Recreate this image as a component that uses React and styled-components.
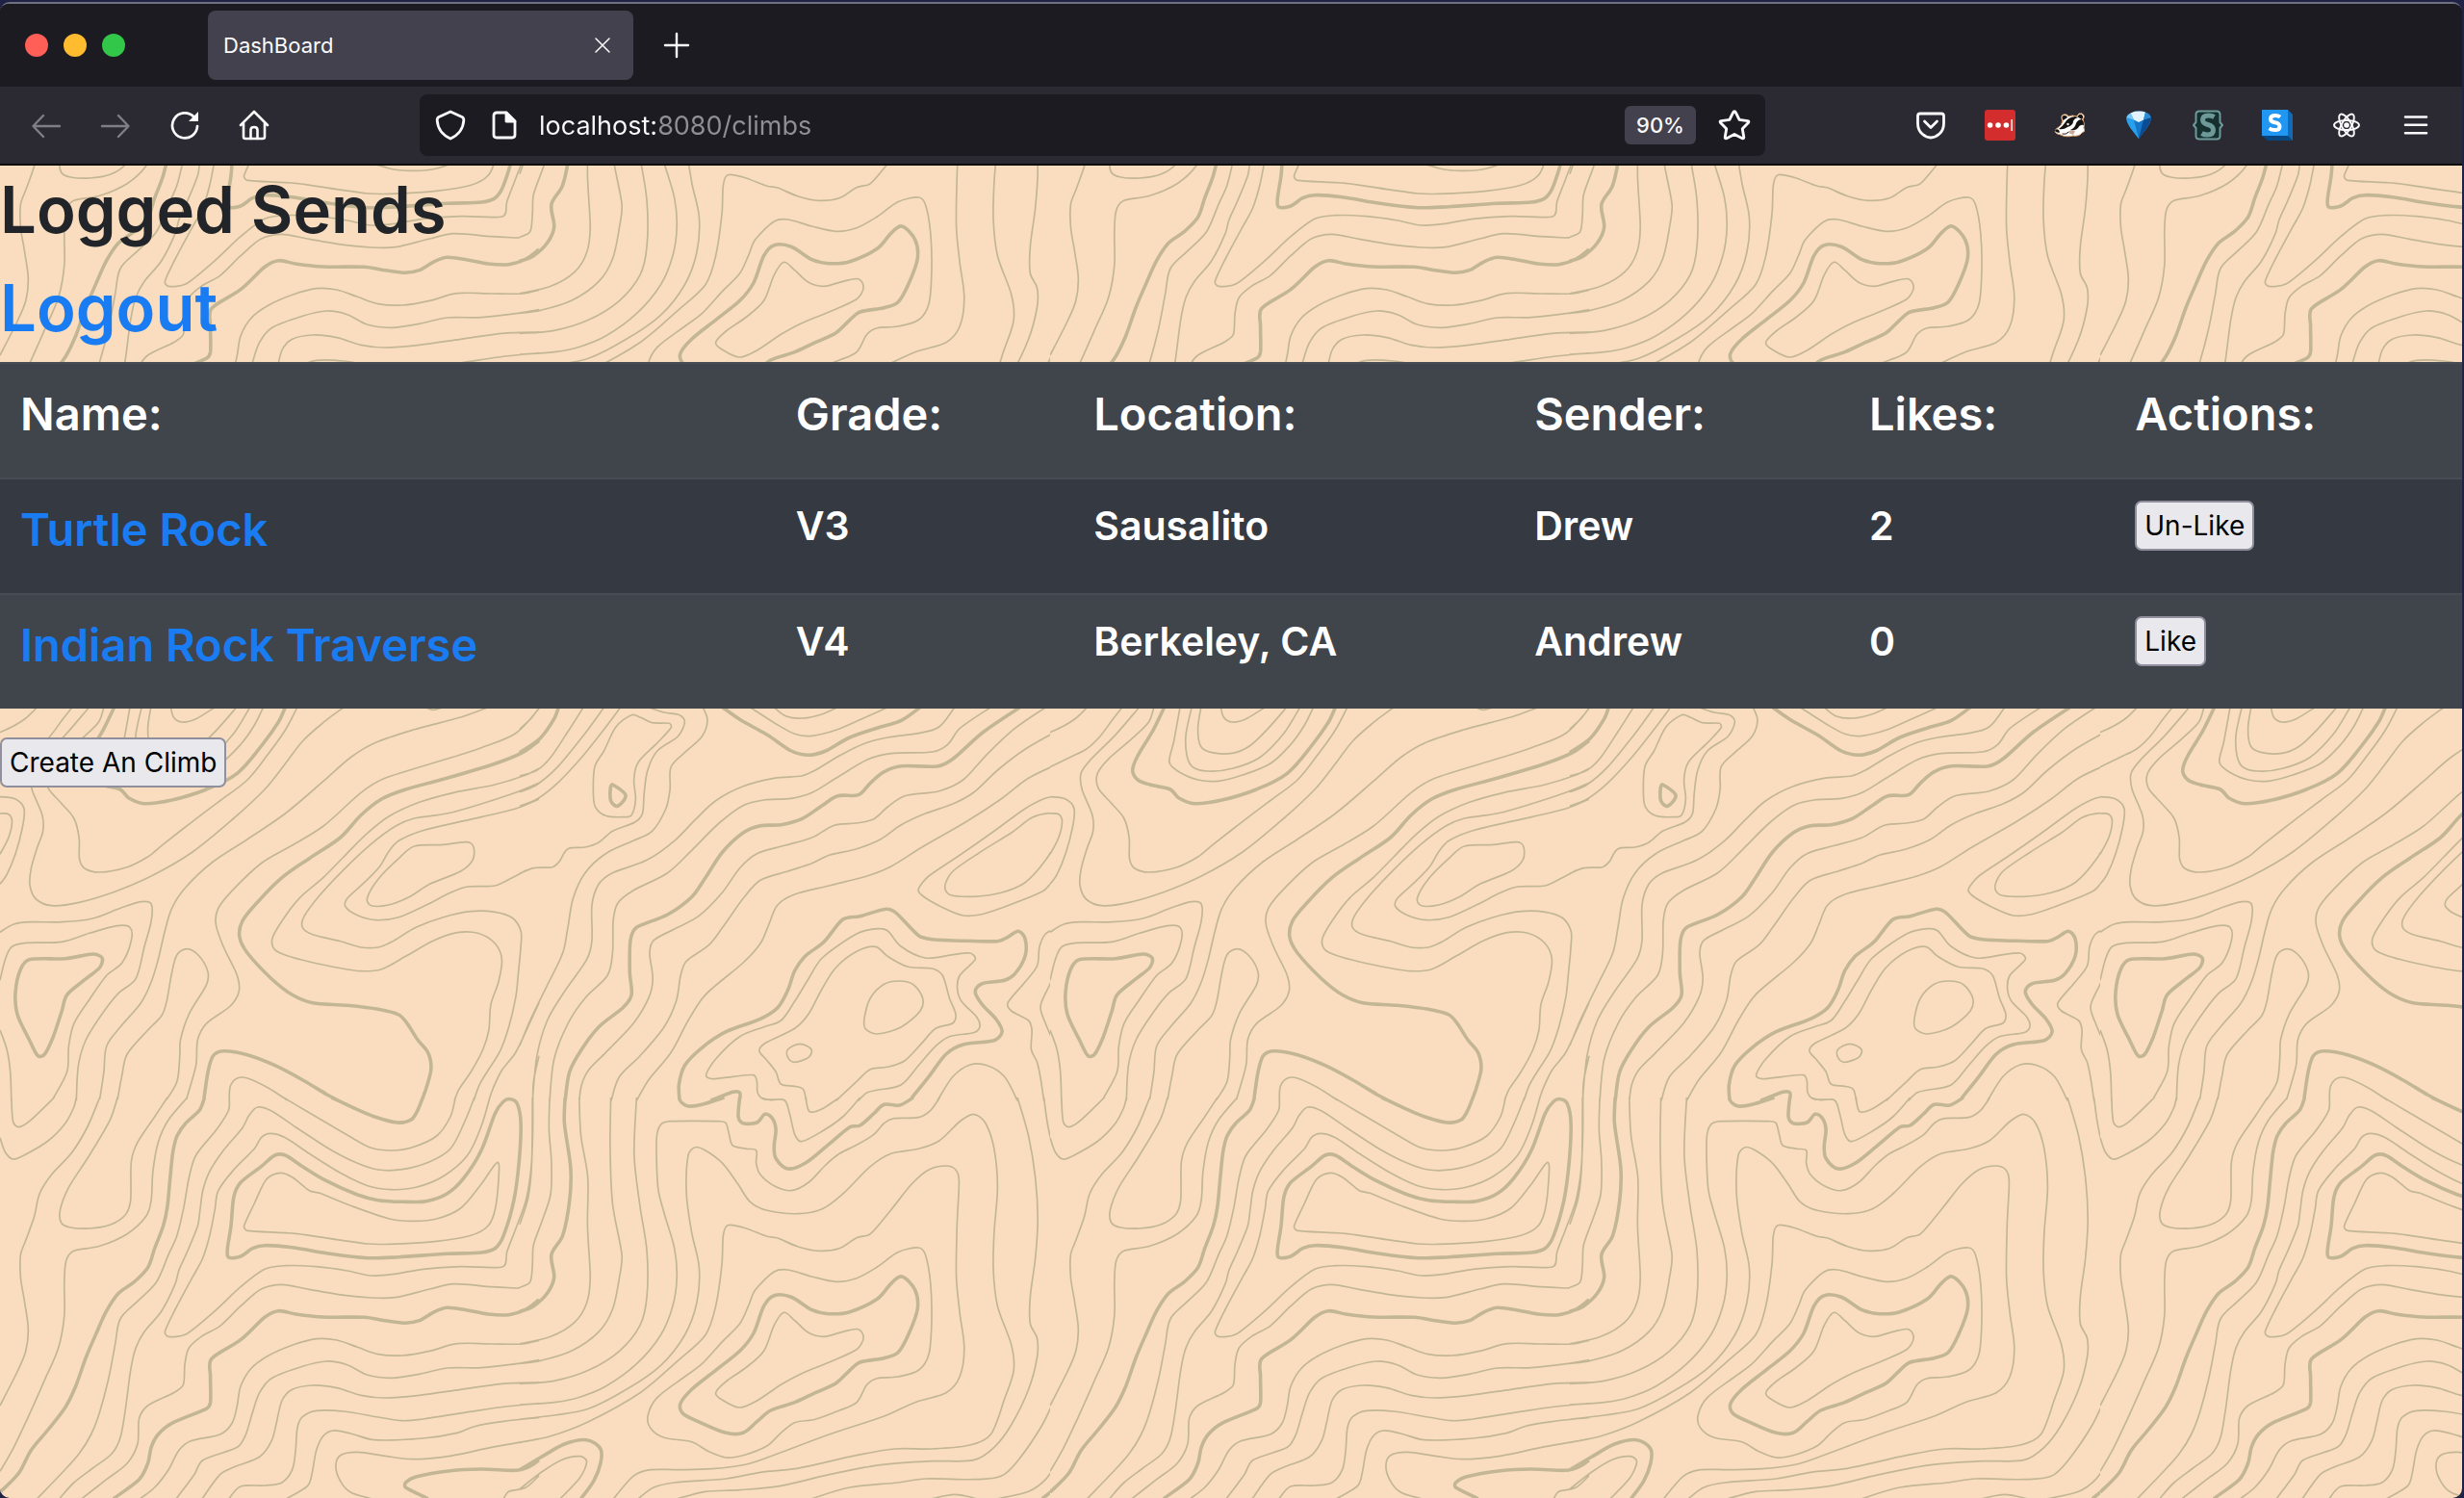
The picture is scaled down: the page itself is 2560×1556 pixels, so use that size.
import React from "react";
import styled, { createGlobalStyle } from "styled-components";

/* ---------- Topographic background ----------
   The tile is surveyed as four sheets. Each sheet has its own origin on the
   tile and its points are in sheet units (2.8 across, 3 down, per pixel).
   "major" are the index contours, "minor" the ordinary ones; a trailing "z"
   closes the contour. */
const TILE = 1091;
const UNIT_X = 2.8;
const UNIT_Y = 3;

const SHEETS = [
  {
    x: 0,
    y: 265,
    major: [
      "1568,118 1520,155 1440,190 1300,235 1180,270 1110,300 1050,350 990,420 900,485 820,545 750,620 705,680 697,730 720,780 790,860 850,910 910,935 1010,943 1100,955 1160,972 1185,1000 1215,1050 1245,1090 1254,1140 1240,1200 1228,1236",
      "593,1236 605,1150 620,1100 650,1085 720,1097 800,1130 880,1175 950,1220 985,1240",
      "60,830 85,800 190,797 270,783 297,795 290,825 250,860 195,910 180,960 155,1040 130,1095 110,1100 85,1050 50,970 45,900 z",
      "332,14 300,85 255,165 240,210 255,240 290,255 350,270 375,297 420,314 500,303 600,270 690,220 760,135 810,60 830,14",
    ],
    minor: [
      "0,92 40,72 75,48 108,14",
      "0,200 57,170 107,143 145,105 180,55 210,14",
      "259,14 190,100 120,175 90,220 93,270 123,350 125,400 107,455 90,520 87,570 105,612 150,632 230,622 330,590 440,540 560,465 680,360 770,270 830,190 880,120 940,62 1000,14",
      "302,14 287,60 240,110 170,175 138,220 140,265 180,315 215,360 230,420 231,485 245,515 290,528 370,512 430,480 470,445 560,370 640,305 720,240 780,160 830,85 865,14",
      "1420,14 1340,45 1200,85 1090,125 1020,170 940,245 830,345 720,425 620,495 540,575 500,640 480,710 460,800 440,870 410,935 350,1010 310,1070 302,1150 290,1236",
      "1568,18 1500,95 1400,140 1300,175 1120,235 1050,280 940,385 840,450 760,500 680,580 635,640 628,690 650,760 690,850 695,900 670,945 600,1000 575,1050 570,1130 542,1236",
      "1568,205 1530,225 1440,255 1320,280 1220,310 1130,355 1060,415 1000,480 940,545 870,610 820,680 792,735 800,770 840,790 900,807 980,825 1050,836 1110,830 1180,790 1260,742 1330,716 1390,718 1440,750 1460,800 1450,870 1428,940 1422,1020 1405,1080 1370,1150 1335,1205 1322,1240",
      "835,1238 780,1200 720,1170 690,1170 670,1195 667,1236",
      "1568,250 1500,280 1400,315 1300,345 1205,360 1150,385 1080,440 1000,520 930,600 885,665 880,700 910,722 990,743 1050,762 1100,762 1140,745 1210,700 1290,668 1370,650 1440,652 1490,670 1515,710 1515,760 1508,840 1500,920 1480,1010 1455,1085 1420,1145 1395,1190 1378,1240",
      "1568,300 1500,330 1350,368 1230,398 1160,430 1130,465 1105,510 1060,560 1010,610 1005,635 1040,662 1095,677 1160,668 1240,630 1310,592 1360,573 1440,570 1490,545 1530,522",
      "1205,447 1290,442 1360,434 1378,450 1375,490 1340,525 1250,565 1190,605 1130,630 1080,632 1068,610 1100,550 1160,485 z",
      "1568,935 1540,1000 1500,1090 1460,1145 1435,1200 1422,1240",
      "1568,1100 1552,1180 1550,1240",
      "0,715 40,690 90,683 180,683 270,672 350,640 410,620 440,627 440,680 420,760 395,860 345,905 300,965 250,1050 228,1130 222,1240",
      "0,865 15,800 35,760 80,748 180,745 260,718 340,695 378,700 382,740 355,810 310,850 260,925 215,1000 200,1070 195,1150 155,1232",
      "0,1020 20,1080 30,1150 33,1240",
      "485,1236 515,1180 523,1100 525,1050 550,970 600,880 605,840 580,790 545,767 515,785 500,840 485,930 470,975 430,1020 370,1095 355,1160 342,1236",
      "0,293 45,300 70,330 65,390 45,470 20,535 0,565",
      "0,345 25,347 35,370 25,420 0,472",
      "378,14 360,120 347,185 375,215 430,240 490,244 560,225 640,190 700,130 740,70 766,14",
      "412,14 395,100 398,165 415,200 460,213 530,205 610,170 680,95 727,14",
      "439,14 430,80 438,135 470,155 530,157 580,135 630,85 688,14",
      "497,14 505,45 530,60 570,50 625,14",
      "1238,14 1260,22 1290,14",
    ],
  },
  {
    x: 540,
    y: 265,
    major: [
      "0,155 60,110 100,50 113,14",
      "270,255 308,288 285,322 265,305 264,265 z",
      "590,14 640,52 720,100 790,150 840,163 890,150 960,108 1050,75 1110,55 1165,14",
      "1455,14 1350,90 1260,175 1215,198 1110,197 1060,215 1020,250 985,287 925,290 880,320 820,362 760,380 700,383 650,405 590,465 540,545 500,605 430,660 340,700 322,740 320,840 325,910 300,950 230,1010 180,1080 145,1150 132,1240",
      "465,1240 463,1190 480,1130 530,1075 600,1025 700,985 750,950 780,895 800,835 830,790 885,745 940,675 990,665 1065,643 1095,655 1160,725 1200,737 1300,742 1390,743 1420,730 1450,712 1470,735 1470,790 1440,845 1410,865 1345,875 1325,900 1345,940 1385,985 1403,1025 1380,1052 1290,1065 1240,1095 1190,1165 1140,1232",
      "640,1236 640,1215 620,1213 555,1240",
    ],
    minor: [
      "0,82 32,50 57,14",
      "0,228 50,210 90,170 140,90 185,14",
      "0,278 50,255 110,200 190,95 245,14",
      "0,322 50,300 110,250 180,170 240,90 293,14",
      "325,38 350,45 385,62 435,64 440,78 400,125 345,185 332,240 337,300 325,350 300,356 250,352 220,325 214,280 218,200 245,150 280,75 z",
      "375,14 420,30 465,38 480,60 460,105 400,150 372,210 362,280 357,345 335,372 270,400 230,435 190,450 140,455 115,495 95,512 40,515 0,532",
      "533,14 546,55 530,105 480,155 440,200 437,270 425,330 385,400 330,430 250,470 190,530 155,610 140,700 125,780 80,880 30,990 0,1068",
      "670,14 740,62 800,97 850,103 920,85 1000,48 1070,14",
      "740,14 775,42 825,48 880,35 925,14",
      "1265,14 1220,75 1160,95 1070,108 1000,128 930,165 860,210 820,228 740,235 650,260 570,305 510,365 450,430 370,490 270,530 230,565 210,630 210,740 195,800 130,900 80,990 50,1100 37,1240",
      "1370,14 1280,80 1245,130 1200,153 1080,158 1010,178 920,235 850,280 790,298 710,303 650,320 580,375 500,460 430,530 330,585 285,625 272,680 270,780 255,850 190,920 140,1000 100,1110 87,1240",
      "1530,14 1440,80 1360,160 1290,240 1220,275 1120,290 1070,325 1030,362 980,375 915,382 850,420 770,445 690,470 640,515 590,590 520,665 450,705 390,740 378,780 387,860 375,920 330,1000 250,1090 200,1145 180,1190 173,1240",
      "1568,85 1470,145 1390,210 1320,280 1260,315 1180,345 1110,380 1050,425 980,455 900,475 850,500 780,525 700,553 650,610 590,700 550,755 485,805 468,850 455,930 420,1010 350,1100 290,1165 266,1240",
      "1568,190 1480,235 1400,300 1300,370 1170,450 1080,510 1010,540 900,570 800,597 750,630 725,690 700,750 650,810 540,910 490,990 440,1090 375,1175 340,1240",
      "1568,293 1530,297 1470,330 1380,400 1280,475 1190,540 1160,580 1170,600 1225,635 1290,663 1340,660 1400,640 1520,588 1550,555 1568,520",
      "1568,350 1540,344 1490,358 1430,405 1340,465 1260,525 1237,570 1250,598 1320,604 1400,592 1470,560 1530,490 1560,430 1568,390",
      "985,1240 1010,1215 1040,1207 1110,1190 1160,1130 1210,1070 1250,1040 1320,1028 1338,1010 1330,980 1285,930 1273,890 1280,850 1325,800 1310,780 1260,785 1180,795 1110,760 1070,710 1040,704 980,720 880,795 840,860 800,930 760,990 710,1010 640,1040 570,1110 542,1160 560,1172 620,1165 680,1160 690,1180 692,1215 710,1235 760,1236",
      "920,1240 980,1180 1020,1142 1070,1135 1120,1115 1170,1060 1210,1015 1260,998 1268,970 1250,920 1230,850 1200,828 1130,823 1070,790 1035,760 980,775 920,825 880,890 840,970 800,1015 715,1060 697,1085 720,1115 745,1150 760,1188 800,1195 825,1205 833,1240",
      "1105,867 1145,878 1172,920 1165,960 1110,1010 1040,1032 1005,1015 1003,980 1020,920 1060,877 z",
      "815,1063 848,1080 840,1105 800,1120 780,1105 780,1080 z",
      "1215,1240 1260,1165 1310,1128 1360,1130 1410,1165 1448,1240",
      "1568,700 1530,720 1512,760 1505,820 1470,870 1420,935 1430,960 1480,990 1490,1020 1488,1080 1505,1120 1515,1170 1525,1240",
      "1568,790 1545,870 1515,945 1530,1000 1560,1080 1568,1130",
    ],
  },
  {
    x: 0,
    y: 675,
    major: [
      "1230,0 1215,40 1195,70 1155,78 1090,60 1030,33 965,0",
      "595,0 580,40 540,80 515,120 503,170 495,250 487,340 475,400 450,470 430,530 390,575 345,610 310,665 280,735 250,810 220,900 190,965 140,1035 90,1100 55,1170 0,1230",
      "1485,5 1505,20 1515,80 1510,200 1495,320 1465,430 1440,470 1400,483 1300,487 1160,497 1070,500 960,487 850,467 770,461 735,470 700,495 665,498 662,470 672,400 680,310 700,265 760,215 800,180 830,180 880,215 950,260 1040,303 1100,320 1170,325 1240,323 1300,300 1350,250 1400,165 1440,50 1465,12 z",
      "1568,630 1530,660 1480,677 1420,675 1360,663 1300,655 1260,670 1220,695 1180,703 1120,695 1060,685 940,684 860,675 810,665 770,685 700,755 615,815 612,870 612,950 600,970 500,1015 460,1050 440,1090 430,1140 405,1190 330,1250",
      "1568,1130 1540,1150 1500,1162 1400,1158 1310,1163 1210,1182 1180,1200 1180,1215 1245,1250",
    ],
    minor: [
      "1325,0 1310,60 1270,120 1200,155 1140,165 1080,157 1020,123 940,73 880,35 825,0",
      "667,0 665,40 630,100 570,180 550,250 535,340 515,430 490,490 455,575 400,635 350,690 335,770 315,880 290,980 265,1050 230,1110 180,1170 108,1250",
      "1380,0 1350,80 1310,160 1250,200 1170,224 1100,225 1030,200 950,155 860,92 790,42 750,30 725,55 705,95 650,165 610,230 590,290 582,350 575,400 545,480 520,540 510,580 470,665 420,730 395,780 380,850 365,970 350,1060 325,1110 270,1155 215,1200 173,1250",
      "1425,0 1400,90 1360,180 1290,245 1210,280 1140,287 1070,275 990,235 900,175 830,125 785,112 760,125 740,160 680,225 635,290 625,350 610,430 590,500 560,560 510,660 480,730 490,745 540,738 620,670 700,590 770,535 830,524 920,527 1010,540 1080,555 1150,550 1230,535 1340,527 1463,527 1475,480 1500,410 1530,320 1545,220 1550,100 1550,0",
      "815,235 850,248 900,290 930,298 1020,337 1130,377 1200,385 1270,378 1340,345 1400,270 1447,202 1450,260 1440,350 1420,400 1370,430 1270,448 1130,457 1070,456 980,443 860,424 720,415 710,400 740,330 775,255 z",
      "1512,593 1500,594 1430,590 1320,581 1250,597 1150,623 1080,624 980,613 900,598 820,583 760,597 700,650 640,712 590,742 550,780 538,830 533,895 505,920 430,960 405,1000 400,1080 370,1140 310,1190 238,1250",
      "1568,757 1520,768 1430,768 1330,767 1250,790 1170,804 1100,800 1040,778 980,756 920,752 850,772 780,805 730,845 700,900 690,960 675,1015 640,1050 555,1070 520,1100 490,1160 450,1215 408,1250",
      "1568,818 1500,830 1400,842 1300,843 1220,862 1140,874 1070,865 1010,833 950,822 880,838 790,875 755,920 735,980 715,1050 690,1090 590,1130 565,1175 513,1250",
      "1568,888 1460,892 1340,910 1220,928 1120,936 1050,928 980,905 910,897 850,910 820,945 805,1010 790,1070 755,1120 680,1152 640,1175 588,1250",
      "1568,953 1470,963 1350,982 1230,1002 1170,1007 1100,996 1000,978 920,976 880,995 865,1030 860,1100 850,1160 820,1200 770,1209 700,1212 666,1250",
      "1568,997 1460,1010 1380,1025 1330,1045 1230,1062 1090,1067 1020,1047 970,1038 940,1055 920,1100 908,1170 895,1210 833,1250",
      "1568,1064 1440,1088 1310,1117 1200,1127 1120,1117 1040,1105 990,1115 977,1150 990,1195 1020,1230 1080,1250",
      "1568,1178 1530,1215 1480,1228 1465,1250",
      "290,0 255,90 210,170 150,240 115,300 100,370 75,445 60,490 60,560 72,640 82,720 75,790 50,855 0,960",
      "33,0 38,75 55,92 90,70 158,0",
      "0,125 15,170 38,192 70,180 140,135 190,80 215,30 222,0",
      "342,0 320,70 260,180 200,280 175,350 178,390 205,405 260,408 320,397 365,365 380,320 382,200 400,140 450,60 487,0",
      "545,0 490,70 460,140 445,230 440,320 425,370 370,425 290,463 215,478 192,510 187,580 187,680 170,780 130,880 80,1000 40,1090 0,1165",
    ],
  },
  {
    x: 540,
    y: 675,
    major: [
      "1145,0 1105,24 1060,22 1030,50 990,87 960,92 900,145 830,205 780,222 745,190 740,150 745,100 735,65 713,52 690,78 650,80 636,60 640,0",
      "595,0 530,22 490,27 470,15 463,0",
      "132,0 130,80 148,220 145,320 125,430 92,490 100,560 80,610 40,650 0,667",
      "1112,558 1150,600 1157,660 1130,740 1100,795 1060,812 990,825 960,850 920,890 860,920 800,950 730,975 690,1010 650,1045 600,1045 530,1015 475,985 467,955 500,910 570,850 640,790 680,735 710,650 740,617 790,622 850,662 900,674 960,668 1040,628 1080,580 z",
      "0,1160 60,1122 130,1080 195,1067 235,1095 235,1140 215,1195 178,1250",
      "1568,1210 1520,1250",
    ],
    minor: [
      "990,0 940,60 880,105 820,137 800,115 785,50 770,8 730,8 700,0",
      "930,0 880,35 845,45 835,20 833,0",
      "1222,0 1195,40 1160,62 1090,65 1060,80 1030,115 980,148 930,175 890,210 840,265 790,290 740,275 700,240 688,205 688,165 660,160 620,150 610,120 600,80 580,74 440,74 410,85 398,130 402,280 420,360 450,470 457,560 445,650 410,740 340,830 250,900 170,935 100,950 0,957",
      "1448,0 1480,120 1500,250 1507,380 1500,500 1485,620 1485,705 1505,750 1505,810 1480,910 1430,1020 1380,1090 1320,1130 1200,1133 1050,1145 900,1175 760,1210 640,1223 540,1228 460,1250",
      "1525,0 1535,80 1550,150 1568,190",
      "37,0 35,200 25,310 0,395",
      "87,0 85,100 92,200 90,300 70,370 40,460 37,520 30,575 0,592",
      "173,0 178,120 198,250 197,400 205,560 195,640 160,700 90,745 0,768",
      "265,0 263,150 270,330 297,490 290,560 270,660 230,730 150,790 60,820 0,829",
      "340,0 333,180 350,340 370,480 370,620 350,710 290,790 200,850 100,883 0,892",
      "345,1250 390,1215 450,1200 600,1188 700,1168 800,1157 980,1115 1090,1095 1200,1095 1310,1083 1370,1050 1410,940 1437,850 1430,770 1390,650 1378,540 1380,420 1390,280 1380,160 1355,80 1320,52 1280,75 1220,135 1160,160 1080,175 1020,215 940,300 880,347 810,362 720,352 670,325 635,270 590,205 540,165 510,155 490,180 485,300 500,420 522,530 515,640 480,740 410,835 310,910 200,970 100,990 0,1003",
      "273,1250 330,1180 380,1160 460,1160 560,1157 660,1143 750,1110 900,1050 1060,993 1150,950 1240,920 1280,870 1293,780 1280,670 1270,560 1272,400 1278,260 1268,225 1240,213 1190,225 1140,270 1080,350 1020,425 980,437 930,470 870,478 810,465 750,438 720,433 650,405 605,398 592,430 588,520 570,650 540,740 460,820 350,920 200,1010 90,1055 0,1075",
      "1160,468 1180,490 1195,580 1198,700 1190,800 1160,850 1100,870 1040,875 1010,895 980,950 930,975 860,1003 800,1013 760,1045 720,1085 650,1115 600,1122 550,1103 500,1073 420,1060 380,1030 373,990 400,935 480,870 530,830 590,760 640,705 665,650 685,600 740,543 780,537 850,558 920,574 980,563 1040,528 1100,482 z",
      "768,670 800,695 840,733 885,745 940,730 985,722 1000,750 980,785 900,825 820,860 760,895 690,945 640,966 590,943 570,920 600,885 660,840 710,790 740,710 z",
      "0,1220 60,1170 120,1130 175,1118 195,1135 175,1185 118,1250",
      "1568,910 1520,1020 1450,1130 1400,1180 1320,1190 1180,1188 1100,1200 960,1215 850,1250",
      "1568,1130 1530,1190 1480,1228 1390,1250",
      "1200,1250 1265,1237 1330,1250",
    ],
  },
];

/* Turns a list of survey points into a smooth cubic path. */
function contour(line, sheet) {
  const closed = line.endsWith("z");
  const pts = line
    .replace(" z", "")
    .split(" ")
    .map((p) => p.split(",").map(Number))
    .map(([x, y]) => [sheet.x + x / UNIT_X, sheet.y + y / UNIT_Y]);
  const n = pts.length;
  const at = (i) => (closed ? pts[(i + n) % n] : pts[Math.max(0, Math.min(n - 1, i))]);
  const f = (v) => v.toFixed(1);
  let d = `M${f(pts[0][0])} ${f(pts[0][1])}`;
  for (let i = 0; i < (closed ? n : n - 1); i += 1) {
    const [a, b, c, e] = [at(i - 1), at(i), at(i + 1), at(i + 2)];
    const span = Math.hypot(c[0] - b[0], c[1] - b[1]);
    const handle = (p, q) => {
      const len = Math.hypot(q[0] - p[0], q[1] - p[1]) || 1;
      const k = Math.min(len / 6, span / 3) / len;
      return [(q[0] - p[0]) * k, (q[1] - p[1]) * k];
    };
    const h1 = handle(a, c);
    const h2 = handle(b, e);
    d += `C${f(b[0] + h1[0])} ${f(b[1] + h1[1])} ${f(c[0] - h2[0])} ${f(c[1] - h2[1])} ${f(c[0])} ${f(c[1])}`;
  }
  return d;
}

const layer = (kind) => SHEETS.map((s) => s[kind].map((l) => contour(l, s)).join("")).join("");

const topoTile = encodeURIComponent(
  `<svg xmlns="http://www.w3.org/2000/svg" width="${TILE}" height="${TILE}" fill="none" stroke="#c3b695" stroke-linejoin="round">` +
    `<path stroke-width="1.7" d="${layer("minor")}"/><path stroke-width="3.6" d="${layer("major")}"/></svg>`
);

/* ---------- Styles ---------- */
const GlobalStyle = createGlobalStyle`
  *, *::before, *::after { box-sizing: border-box; }
  body {
    margin: 0;
    font-family: Inter, "Liberation Sans", sans-serif;
    background: #17183a;
  }
`;

const Desktop = styled.div`
  display: flex;
  min-height: 100vh;
  padding: 2px 2px 0 0;
  background: #1f2145;
`;

const BrowserWindow = styled.div`
  flex: 1;
  display: flex;
  flex-direction: column;
  border-top: 2px solid #6f7080;
  border-radius: 10px;
  overflow: hidden;
  background: #1c1b22;
`;

const TitleBar = styled.header`
  display: flex;
  align-items: center;
  height: 86px;
  padding: 0 26px;
  background: #1c1b22;
`;

const Lights = styled.div`
  display: flex;
  gap: 16px;
  margin-right: 86px;
`;

const Light = styled.button`
  width: 24px;
  height: 24px;
  padding: 0;
  border: 0;
  border-radius: 50%;
  background: ${(p) => p.$color};
`;

const Tab = styled.div`
  display: flex;
  align-items: center;
  justify-content: space-between;
  width: 442px;
  height: 72px;
  padding: 0 16px;
  border-radius: 8px;
  background: #42414d;
  color: #fbfbfe;
  font-size: 22px;
`;

const IconButton = styled.button`
  display: flex;
  align-items: center;
  justify-content: center;
  width: ${(p) => p.$width || 72}px;
  height: 64px;
  padding: 0;
  border: 0;
  background: none;
  color: #fbfbfe;
  opacity: ${(p) => (p.disabled ? 0.4 : 1)};
`;

const Toolbar = styled.nav`
  display: flex;
  align-items: center;
  height: 82px;
  padding: 0 12px;
  border-bottom: 2px solid #0c0c0d;
  background: #2b2a33;
`;

const ToolGroup = styled.div`
  display: flex;
`;

const AddressBar = styled.div`
  display: flex;
  align-items: center;
  flex: 1;
  height: 64px;
  margin: 0 136px;
  padding: 0 4px;
  border-radius: 8px;
  background: #1c1b22;
`;

const Address = styled.input`
  flex: 1;
  min-width: 0;
  height: 48px;
  margin-left: 8px;
  padding: 0;
  border: 0;
  outline: 0;
  background: linear-gradient(90deg, #fbfbfe 121px, #8f8f96 121px);
  background-clip: text;
  -webkit-background-clip: text;
  -webkit-text-fill-color: transparent;
  color: #fbfbfe;
  font: 400 27px Inter, "Liberation Sans", sans-serif;
`;

const Zoom = styled.button`
  width: 74px;
  height: 40px;
  margin-right: 12px;
  padding: 0;
  border: 0;
  border-radius: 6px;
  background: #42414d;
  color: #fbfbfe;
  font: 500 22px Inter, "Liberation Sans", sans-serif;
`;

const Page = styled.main`
  flex: 1;
  background: #f9ddbe url("data:image/svg+xml,${topoTile}") 0 293px repeat;
`;

const Heading = styled.h1`
  margin: 0 0 10px;
  color: #212529;
  font-size: 67px;
  font-weight: 600;
  line-height: 92px;
`;

const Link = styled.a`
  color: #1a7cf2;
  text-decoration: none;
`;

const ClimbTable = styled.table`
  width: 100%;
  margin-bottom: 30px;
  border-collapse: separate;
  border-spacing: 0;
  table-layout: fixed;
  color: #fff;
`;

const Column = styled.col`
  width: ${(p) => p.$width};
`;

const Row = styled.tr`
  height: 120px;
  background: #353941;

  &:nth-child(odd) {
    background: #40444b;
  }
`;

const cell = `
  padding: 22px 21px 0;
  border-top: 2px solid #474c54;
  text-align: left;
  vertical-align: top;
  font-weight: 600;
  white-space: nowrap;
`;

const HeadCell = styled.th`
  ${cell}
  font-size: 47px;
  line-height: 60px;
`;

const NameCell = styled.td`
  ${cell}
  font-size: 47px;
  line-height: 60px;
`;

const Cell = styled.td`
  ${cell}
  font-size: 41px;
  line-height: 52px;
`;

const Button = styled.button`
  display: block;
  height: 52px;
  padding: 0 8px;
  border: 2px solid #8f8f9d;
  border-radius: 7px;
  background: #e9e9ed;
  color: #000;
  font: 400 28px Inter, "Liberation Sans", sans-serif;
`;

/* ---------- Icons ---------- */
const Icon = ({ size = 32, width = 2, children }) => (
  <svg
    width={size}
    height={size}
    viewBox="0 0 32 32"
    fill="none"
    stroke="currentColor"
    strokeWidth={width}
    strokeLinecap="round"
    strokeLinejoin="round"
    aria-hidden="true"
  >
    {children}
  </svg>
);

const CloseIcon = () => (
  <Icon size={16} width={3}>
    <path d="M2 2 30 30M30 2 2 30" />
  </Icon>
);
const PlusIcon = () => (
  <Icon width={2.4}>
    <path d="M16 4v24M4 16h24" />
  </Icon>
);
const BackIcon = () => (
  <Icon width={2.4}>
    <path d="M30 17H3M13 6 2.500 17 13 28" />
  </Icon>
);
const ForwardIcon = () => (
  <Icon width={2.400}>
    <path d="M2 17h27M19 6l10.500 11L19 28" />
  </Icon>
);
const ReloadIcon = () => (
  <Icon width={2.700}>
    <path d="M29 17A13 13 0 1 1 25.500 7.500" />
    <path d="M30 2v10H20z" fill="currentColor" stroke="none" />
  </Icon>
);
const HomeIcon = () => (
  <Icon width={2.600}>
    <path d="M2 16 16 2l14 14M5 14v14q0 2 2 2h18q2 0 2-2V14" />
    <path d="M12.500 30V21q0-3 3.500-3t3.500 3v9" />
  </Icon>
);
const ShieldIcon = () => (
  <Icon width={2.800}>
    <path d="M16 2 28 7.500q2 1 1.800 3.500Q29 24 16 30 3 24 2.200 11 2 8.500 4 7.500z" />
  </Icon>
);
const FileIcon = () => (
  <Icon width={2.800}>
    <path d="M8 3h10l9 9v14q0 3-3 3H8q-3 0-3-3V6q0-3 3-3z" />
    <path d="M18 3v9h9z" fill="currentColor" />
  </Icon>
);
const StarIcon = () => (
  <Icon size={34} width={2.700}>
    <path d="M16 2.500q.8 0 1.200.9l3.600 7.300 8.200 1.200q1.700.4.600 1.700L23.800 19.500l1.400 8.200q.1 1.700-1.500 1.200L16 25l-7.700 3.900q-1.600.5-1.500-1.200l1.400-8.200L2.400 13.600q-1.100-1.300.6-1.700l8.200-1.200 3.600-7.300q.4-.9 1.200-.9z" />
  </Icon>
);
const PocketIcon = () => (
  <Icon width={2.800}>
    <path d="M5 4h22q2.500 0 2.500 2.500V14q0 7-4.500 11t-9 4-9-4-4.500-11V6.500Q2.500 4 5 4z" />
    <path d="m9.500 12 6.500 6.500 6.500-6.500" />
  </Icon>
);
const DotsIcon = () => (
  <Icon>
    <rect width="32" height="32" rx="3" fill="#d32d2e" stroke="none" />
    <g fill="#fff" stroke="none">
      <circle cx="5.600" cy="16" r="2.800" />
      <circle cx="14" cy="16" r="2.800" />
      <circle cx="22.400" cy="16" r="2.800" />
      <rect x="27.400" y="10" width="1.400" height="12" />
    </g>
  </Icon>
);
const BadgerIcon = () => (
  <Icon>
    <path
      d="M9 12Q6 6 10 5q4-1 5 2 4-2 9 0 1-4 5-3 4 2 1 6 2 4 1 9l1 3-3 2q-3 4-9 3-8 2-13-1-5-1-6-3 0-3 4-5 3-2 4-6z"
      fill="#fff"
      stroke="#dfa06a"
      strokeWidth="1"
    />
    <g fill="#15120f" stroke="none">
      <path d="M9.500 11Q7 6.500 10.500 6q3-.5 3.500 2zM24.500 7.500q1-3.500 4-2.500 3 2 .5 5z" />
      <path d="M22 7q-8 1-11 7-2 3-6 6 5 1 9-2 6-2 6-6 1-3 5-4z" />
      <path d="M29 10q-4 0-6 4-1 5-6 7 5 1 8-2 2-4 6-3 0-4-2-6z" />
      <path d="M1 22q1-3 4-1l1 2.500q-3 1-5-1.500z" />
    </g>
    <circle cx="14.500" cy="15" r="1.200" fill="#fff" stroke="none" />
    <path d="M15 24q1-3 4-3l3 1-2 4z" fill="#c9a99a" stroke="none" />
    <path d="M9 25q4 1 6-2" stroke="#15120f" strokeWidth="1" />
  </Icon>
);
const PinIcon = () => (
  <Icon>
    <g stroke="none">
      <path d="M16 1.500q8 0 12.500 5.500 1.500 4-4 12l-8.500 11-8.500-11Q2 11 3.500 7 8 1.500 16 1.500z" fill="#1b8fe0" />
      <path d="M16 12v18l-8.500-11Q3 12 3.300 8z" fill="#2a9fec" />
      <path d="M16 12v18l8.500-11Q29 12 28.700 8z" fill="#0a4b93" />
      <path d="M11 10.500 16 30l5-19.500z" fill="#1577c8" />
      <path d="M12 1.800q8-1 11 .8l-2 8-5 2.400-5-2.400-3.500-7z" fill="#e3f3fd" />
      <path d="M7.500 3.500Q4 5 3.300 8l7.700 2.500z" fill="#79c6f5" />
      <path d="M23 2.600q5 2 5.700 5.400L21 10.500z" fill="#2c8ad6" />
    </g>
  </Icon>
);
const BraceIcon = () => (
  <Icon>
    <path
      d="M7 1.500h18q3.500 0 3.500 3.500v8l2.500 3-2.500 3v8q0 3.500-3.500 3.500H7q-3.500 0-3.500-3.500v-8L1 16l2.500-3V5q0-3.500 3.500-3.500z"
      fill="#16302f"
      stroke="#6d9a99"
      strokeWidth="2"
    />
    <path d="M22.500 7.500Q20 6 16.500 6 10.500 6 10.500 10.500q0 3.500 5.500 5 5.500 1.500 5.500 5.500 0 5-6 5-3.500 0-6-1.500" stroke="#6d9a99" strokeWidth="5" strokeLinecap="butt" />
  </Icon>
);
const CubeIcon = () => (
  <Icon>
    <g stroke="none">
      <path d="M27 0l5 5v27H6l-6-5z" fill="#08467f" />
      <path d="M27 0l5 5v27l-5-5z" fill="#1269b4" />
      <path d="M0 0h27v27H0z" fill="#2196f3" />
    </g>
    <path d="M19 7.500Q17 6 13.800 6 9 6 9 9.500q0 3 4.500 3.800 5 .9 5 4.200 0 3.500-5 3.500-3.500 0-6-1.600" stroke="#fff" strokeWidth="4" strokeLinecap="butt" />
  </Icon>
);
const ReactIcon = () => (
  <Icon width={1.900}>
    <circle cx="16" cy="16" r="2.800" fill="currentColor" stroke="none" />
    {[30, 90, 150].map((turn) => (
      <ellipse key={turn} cx="16" cy="16" rx="13" ry="5" transform={`rotate(${turn + 30} 16 16)`} />
    ))}
  </Icon>
);
const MenuIcon = () => (
  <Icon width={2.600}>
    <path d="M5 7.500h22M5 15.800h22M5 24.200h22" />
  </Icon>
);

/* ---------- Content ---------- */
const LIGHTS = [
  ["Close window", "#ff5f57"],
  ["Minimize window", "#febc2e"],
  ["Full screen", "#32c748"],
];

const EXTENSIONS = [
  ["Save to Pocket", PocketIcon],
  ["Password manager", DotsIcon],
  ["Privacy Badger", BadgerIcon],
  ["Inspector", PinIcon],
  ["Snippets", BraceIcon],
  ["Blocks", CubeIcon],
  ["React Developer Tools", ReactIcon],
  ["Open menu", MenuIcon],
];

const COLUMNS = [
  ["Name:", "31.5%"],
  ["Grade:", "12.1%"],
  ["Location:", "17.9%"],
  ["Sender:", "13.6%"],
  ["Likes:", "10.8%"],
  ["Actions:", "14.1%"],
];

const CLIMBS = [
  { name: "Turtle Rock", grade: "V3", location: "Sausalito", sender: "Drew", likes: 2, action: "Un-Like" },
  { name: "Indian Rock Traverse", grade: "V4", location: "Berkeley, CA", sender: "Andrew", likes: 0, action: "Like" },
];

export default function App() {
  return (
    <>
      <GlobalStyle />
      <Desktop>
        <BrowserWindow>
          <TitleBar>
            <Lights>
              {LIGHTS.map(([label, color]) => (
                <Light key={label} aria-label={label} $color={color} />
              ))}
            </Lights>
            <Tab>
              DashBoard
              <IconButton aria-label="Close tab" $width={32}>
                <CloseIcon />
              </IconButton>
            </Tab>
            <IconButton aria-label="New tab" $width={90}>
              <PlusIcon />
            </IconButton>
          </TitleBar>
          <Toolbar aria-label="Navigation">
            <ToolGroup>
              <IconButton aria-label="Back" disabled>
                <BackIcon />
              </IconButton>
              <IconButton aria-label="Forward" disabled>
                <ForwardIcon />
              </IconButton>
              <IconButton aria-label="Reload">
                <ReloadIcon />
              </IconButton>
              <IconButton aria-label="Home">
                <HomeIcon />
              </IconButton>
            </ToolGroup>
            <AddressBar>
              <IconButton aria-label="Tracking protection" $width={56}>
                <ShieldIcon />
              </IconButton>
              <IconButton aria-label="Site information" $width={56}>
                <FileIcon />
              </IconButton>
              <Address aria-label="Address" defaultValue="localhost:8080/climbs" />
              <Zoom>90%</Zoom>
              <IconButton aria-label="Bookmark this page" $width={56}>
                <StarIcon />
              </IconButton>
            </AddressBar>
            <ToolGroup>
              {EXTENSIONS.map(([label, Glyph]) => (
                <IconButton key={label} aria-label={label}>
                  <Glyph />
                </IconButton>
              ))}
            </ToolGroup>
          </Toolbar>
          <Page>
            <Heading>Logged Sends</Heading>
            <Heading as="h2">
              <Link href="/logout">Logout</Link>
            </Heading>
            <ClimbTable>
              <colgroup>
                {COLUMNS.map(([title, width]) => (
                  <Column key={title} $width={width} />
                ))}
              </colgroup>
              <tbody>
                <Row>
                  {COLUMNS.map(([title]) => (
                    <HeadCell key={title} scope="col">
                      {title}
                    </HeadCell>
                  ))}
                </Row>
                {CLIMBS.map((climb) => (
                  <Row key={climb.name}>
                    <NameCell>
                      <Link href="/climbs/view">{climb.name}</Link>
                    </NameCell>
                    <Cell>{climb.grade}</Cell>
                    <Cell>{climb.location}</Cell>
                    <Cell>{climb.sender}</Cell>
                    <Cell>{climb.likes}</Cell>
                    <Cell>
                      <Button>{climb.action}</Button>
                    </Cell>
                  </Row>
                ))}
              </tbody>
            </ClimbTable>
            <Button>Create An Climb</Button>
          </Page>
        </BrowserWindow>
      </Desktop>
    </>
  );
}
